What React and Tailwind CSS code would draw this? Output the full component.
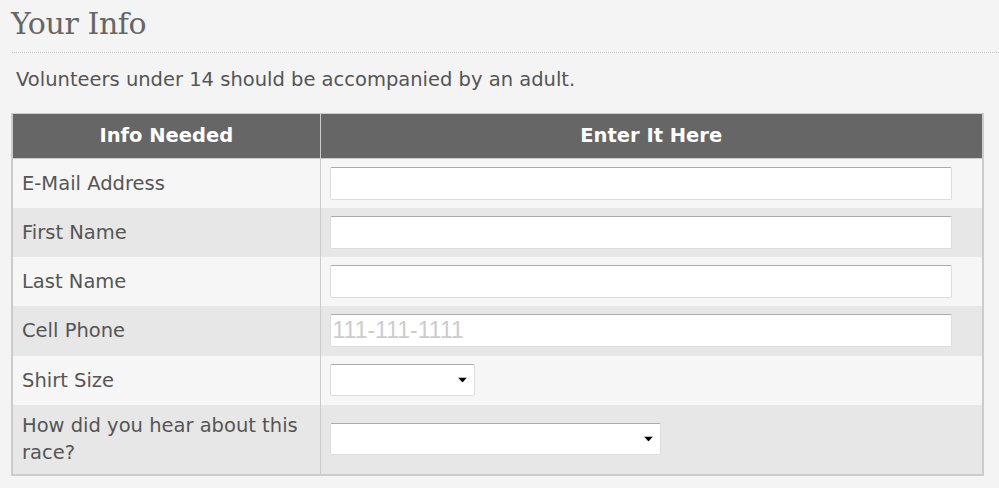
export default function App() {
  const rows = [
    { label: "E-Mail Address", kind: "input", h: "h-[49px]" },
    { label: "First Name", kind: "input", h: "h-[49px]" },
    { label: "Last Name", kind: "input", h: "h-[49px]" },
    { label: "Cell Phone", kind: "input", placeholder: "111-111-1111", h: "h-[50px]" },
    { label: "Shirt Size", kind: "select-sm", h: "h-[49px]" },
    { label: "How did you hear about this race?", kind: "select-lg", h: "h-[70px]" },
  ];
  const Arrow = () => (
    <svg width="9" height="5" viewBox="0 0 9 5" className="absolute right-[7px] top-1/2 -translate-y-1/2">
      <path d="M0 0H9L4.5 5Z" fill="#000" />
    </svg>
  );
  return (
    <div className="w-[999px] h-[488px] bg-[#f4f4f4] overflow-hidden" style={{ fontFamily: '"DejaVu Sans", Verdana, sans-serif' }}>
      <h1 className="pl-[11px] pt-[4px] text-[30px] leading-[40px] tracking-[-0.4px] text-[#666] font-normal" style={{ fontFamily: '"DejaVu Serif", Georgia, serif' }}>
        Your Info
      </h1>
      <div className="ml-[12px] mt-[8px] border-t border-dotted border-[#c8c8c8]" />
      <p className="pl-[16px] pt-[15px] text-[19.5px] leading-[24px] text-[#555]">
        Volunteers under 14 should be accompanied by an adult.
      </p>
      <table className="ml-[11px] mt-[21px] w-[973px] border-collapse border-x-2 border-b-2 border-t border-[#ccc] text-[19.5px] text-[#555]">
        <thead>
          <tr className="bg-[#666] text-white h-[45px]">
            <th className="w-[308px] border-r border-b border-[#ccc] font-bold text-center">Info Needed</th>
            <th className="border-b border-[#ccc] font-bold text-center">Enter It Here</th>
          </tr>
        </thead>
        <tbody>
          {rows.map((r, i) => (
            <tr key={i} className={i % 2 === 0 ? "bg-[#f6f6f6]" : "bg-[#e7e7e7]"}>
              <td className={`border-r border-[#ccc] pl-[9px] pr-[9px] align-middle leading-[27px] ${r.h}`}>
                {r.label}
              </td>
              <td className="pl-[9px] align-middle">
                {r.kind === "input" && (
                  <div className="w-[622px] h-[33px] bg-white border border-[#ddd] border-t-[#aaa] rounded-[2px] flex items-center pl-[2px]">
                    {r.placeholder && (
                      <span className="text-[#ccc] text-[23px] leading-none" style={{ fontFamily: '"Liberation Sans", Arial, sans-serif' }}>{r.placeholder}</span>
                    )}
                  </div>
                )}
                {r.kind === "select-sm" && (
                  <div className="relative w-[145px] h-[32px] bg-white border border-[#ddd] border-t-[#aaa] rounded-[2px]">
                    <Arrow />
                  </div>
                )}
                {r.kind === "select-lg" && (
                  <div className="relative w-[331px] h-[32px] bg-white border border-[#ddd] border-t-[#aaa] rounded-[2px]">
                    <Arrow />
                  </div>
                )}
              </td>
            </tr>
          ))}
        </tbody>
      </table>
    </div>
  );
}
